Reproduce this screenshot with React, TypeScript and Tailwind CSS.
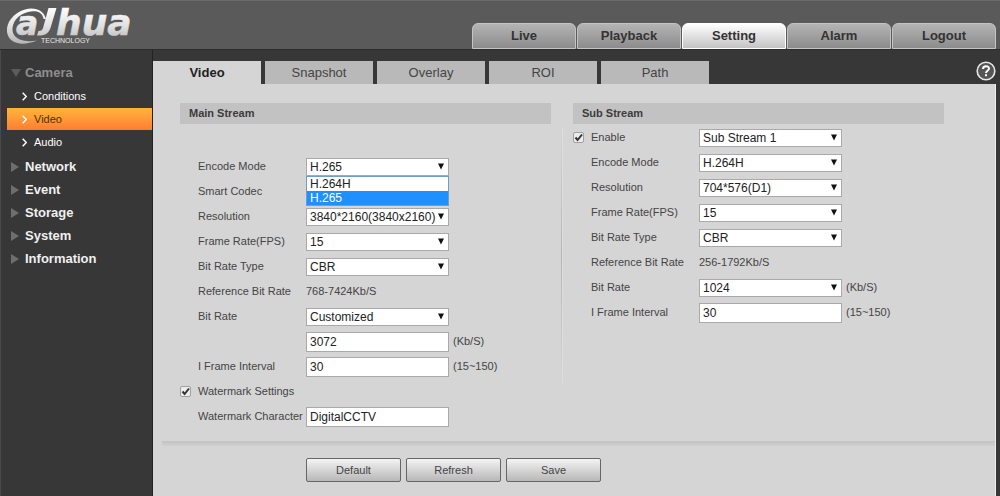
import { useId, useState } from 'react'
import type { ReactNode } from 'react'

const MAIN_TABS = ['Live', 'Playback', 'Setting', 'Alarm', 'Logout']
const SUB_TABS = ['Video', 'Snapshot', 'Overlay', 'ROI', 'Path']
const CAMERA_ITEMS = ['Conditions', 'Video', 'Audio']
const GROUPS = ['Network', 'Event', 'Storage', 'System', 'Information']
const CODECS = ['H.264H', 'H.265']

function Logo() {
  return (
    <svg width="134" height="48" viewBox="4 1 134 48" role="img" aria-label="Dahua Technology">
      <defs>
        <linearGradient id="metal" gradientUnits="userSpaceOnUse" x1="0" y1="7" x2="0" y2="44">
          <stop offset="0" stopColor="#ffffff" />
          <stop offset="0.5" stopColor="#e2e2e2" />
          <stop offset="1" stopColor="#b4b4b4" />
        </linearGradient>
      </defs>
      <g fill="url(#metal)">
        {/* swirl around the first letter */}
        <path d="M46 19 C44 10.500 35 6.500 25 9.500 C13 13 6 23 7 32 C8.500 43 21 47 37 40.500 C25 43 13.500 39.500 12.500 30.500 C12 22 18 14.500 28 12 C37 10 42.500 12.500 43.500 19 Z" />
        {/* hooked stem */}
        <path d="M48.500 8 H56.500 L50.800 27 C49 33.500 45 36 37 35.500 L38.500 31 C41.500 31 42.500 30 43.200 27.500 Z" />
        <g
          fontFamily="'DejaVu Sans', sans-serif"
          fontWeight="bold"
          fontStyle="italic"
          stroke="url(#metal)"
          strokeWidth="0.600"
        >
          <text x="16" y="35" fontSize="33">a</text>
          <text x="56" y="35" fontSize="36">hua</text>
        </g>
      </g>
      <text x="41" y="43" fontSize="7" fill="#e8e8e8" fontFamily="'Liberation Sans', sans-serif">
        TECHNOLOGY
      </text>
    </svg>
  )
}

function HelpIcon() {
  return (
    <svg width="20" height="20" viewBox="0 0 20 20" aria-hidden>
      <circle cx="10" cy="10" r="8.800" fill="#555" stroke="#e8e8e8" strokeWidth="1.600" />
      <path
        d="M7 8 C7 4.300 13 4.300 13 7.600 C13 9.800 10 9.800 10 12"
        fill="none"
        stroke="#fff"
        strokeWidth="2"
      />
      <rect x="9" y="13.200" width="2" height="2" fill="#fff" />
    </svg>
  )
}

function Row({ label, check, children }: { label?: string; check?: boolean; children?: (id: string) => ReactNode }) {
  const id = useId()
  const checkId = useId()
  return (
    <div className="grid h-[25px] grid-cols-[18px_108px_1fr] items-center">
      <span className="relative h-[11px] w-[11px]">
        {check && (
          <>
            <input
              id={checkId}
              type="checkbox"
              defaultChecked
              className="peer block h-[11px] w-[11px] appearance-none rounded-xs border border-[#a0a0a0] bg-[#ececec]"
            />
            <svg
              viewBox="0 0 11 11"
              className="pointer-events-none absolute inset-0 hidden h-[11px] w-[11px] peer-checked:block"
            >
              <path d="M2.500 5.500 L4.600 8 L9 2.500" fill="none" stroke="#333" strokeWidth="2" />
            </svg>
          </>
        )}
      </span>
      {label ? (
        <label htmlFor={check ? checkId : id} className="whitespace-nowrap">
          {label}
        </label>
      ) : (
        <span />
      )}
      <div className="flex items-center gap-1">{children?.(id)}</div>
    </div>
  )
}

function Select({ id, value, label, children }: { id?: string; value: string; label?: string; children?: ReactNode }) {
  return (
    <div className="relative w-[143px]">
      <select
        id={id}
        aria-label={label}
        defaultValue={value}
        className="block h-[18px] w-full appearance-none border border-[#a9a9a9] bg-white pl-[3px] text-[12px] leading-4 text-[#222]"
      >
        <option>{value}</option>
      </select>
      <svg
        viewBox="0 0 8 7"
        className="pointer-events-none absolute top-[5px] right-1 h-[7px] w-2"
      >
        <path d="M1 0.500 H7 L4 6.500 Z" fill="#111" />
      </svg>
      {children}
    </div>
  )
}

function TextBox({ id, value, label }: { id?: string; value: string; label?: string }) {
  return (
    <input
      id={id}
      type="text"
      aria-label={label}
      defaultValue={value}
      className="h-5 w-[143px] border border-[#a9a9a9] bg-white pl-[3px] text-[12px] text-[#222]"
    />
  )
}

function SectionTitle({ children }: { children: ReactNode }) {
  return (
    <h2 className="h-[21px] bg-[#c2c2c2] pl-[9px] text-[11px] leading-[21px] font-bold text-[#3c3c3c]">
      {children}
    </h2>
  )
}

function Sidebar() {
  return (
    <nav className="w-[153px] shrink-0 border-r border-l border-r-[#222] border-l-[#4a4a4a] pt-[11px] pl-[6px] text-white">
      <button type="button" className="flex h-6 items-center gap-1 pl-1 text-[13px] font-bold text-[#8e8e8e]">
        <svg width="10" height="8" viewBox="0 0 10 8" aria-hidden>
          <path d="M0 0 H10 L5 8 Z" fill="#5c5c5c" />
        </svg>
        Camera
      </button>
      <ul className="pb-px text-[11px]">
        {CAMERA_ITEMS.map((item) => (
          <li key={item} className="h-[23px]">
            <a
              href="#"
              className={`flex h-[22px] items-center gap-[7px] pl-[15px] ${
                item === 'Video' ? 'bg-linear-to-b from-[#ffb43c] to-[#ff7d32] text-[#4d3010]' : ''
              }`}
            >
              <svg width="5" height="9" viewBox="0 0 5 9" aria-hidden>
                <path d="M0.700 0.700 L4.300 4.500 L0.700 8.300" fill="none" stroke="#fff" strokeWidth="1.500" />
              </svg>
              {item}
            </a>
          </li>
        ))}
      </ul>
      {GROUPS.map((group) => (
        <button
          key={group}
          type="button"
          className="flex h-[23px] w-full items-center gap-[6px] pl-1 text-[13px] font-bold text-[#f0f0f0]"
        >
          <svg width="8" height="10" viewBox="0 0 8 10" aria-hidden>
            <path d="M0 0 L8 5 L0 10 Z" fill="#6e6e6e" />
          </svg>
          {group}
        </button>
      ))}
    </nav>
  )
}

function MainStream() {
  const [codec, setCodec] = useState('H.265')
  return (
    <section>
      <SectionTitle>Main Stream</SectionTitle>
      <div className="pt-[30px]">
        <Row label="Encode Mode">
          {(id) => (
            <Select id={id} value="H.265">
              <ul
                role="listbox"
                aria-label="Encode Mode"
                className="absolute inset-x-0 top-full z-10 border border-[#6f9fc8] bg-white text-[12px] leading-[14px] text-[#222]"
              >
                {CODECS.map((name) => (
                  <li
                    key={name}
                    role="option"
                    aria-selected={name === codec}
                    onClick={() => setCodec(name)}
                    className="pl-[3px] aria-selected:bg-[#1e90ff] aria-selected:text-white"
                  >
                    {name}
                  </li>
                ))}
              </ul>
            </Select>
          )}
        </Row>
        <Row label="Smart Codec" />
        <Row label="Resolution">{(id) => <Select id={id} value="3840*2160(3840x2160)" />}</Row>
        <Row label="Frame Rate(FPS)">{(id) => <Select id={id} value="15" />}</Row>
        <Row label="Bit Rate Type">{(id) => <Select id={id} value="CBR" />}</Row>
        <Row label="Reference Bit Rate">{(id) => <output id={id}>768-7424Kb/S</output>}</Row>
        <Row label="Bit Rate">{(id) => <Select id={id} value="Customized" />}</Row>
        <Row>
          {(id) => (
            <>
              <TextBox id={id} label="Custom bit rate" value="3072" />
              <span>(Kb/S)</span>
            </>
          )}
        </Row>
        <Row label="I Frame Interval">
          {(id) => (
            <>
              <TextBox id={id} value="30" />
              <span>(15~150)</span>
            </>
          )}
        </Row>
        <Row label="Watermark Settings" check />
        <Row label="Watermark Character">{(id) => <TextBox id={id} value="DigitalCCTV" />}</Row>
      </div>
    </section>
  )
}

function SubStream() {
  return (
    <section>
      <SectionTitle>Sub Stream</SectionTitle>
      <div className="pt-px">
        <Row label="Enable" check>
          {(id) => <Select id={id} label="Sub stream" value="Sub Stream 1" />}
        </Row>
        <Row label="Encode Mode">{(id) => <Select id={id} value="H.264H" />}</Row>
        <Row label="Resolution">{(id) => <Select id={id} value="704*576(D1)" />}</Row>
        <Row label="Frame Rate(FPS)">{(id) => <Select id={id} value="15" />}</Row>
        <Row label="Bit Rate Type">{(id) => <Select id={id} value="CBR" />}</Row>
        <Row label="Reference Bit Rate">{(id) => <output id={id}>256-1792Kb/S</output>}</Row>
        <Row label="Bit Rate">
          {(id) => (
            <>
              <Select id={id} value="1024" />
              <span>(Kb/S)</span>
            </>
          )}
        </Row>
        <Row label="I Frame Interval">
          {(id) => (
            <>
              <TextBox id={id} value="30" />
              <span>(15~150)</span>
            </>
          )}
        </Row>
      </div>
    </section>
  )
}

export default function App() {
  return (
    <div className="flex min-h-screen flex-col bg-[#373737] font-['Liberation_Sans',Arial,sans-serif]">
      <header className="flex h-[50px] items-end justify-between border-t border-b border-t-[#6a6a6a] border-b-[#2c2c2c] bg-[#5a5a5a] pr-1 pl-1">
        <Logo />
        <nav className="flex gap-px">
          {MAIN_TABS.map((tab) => (
            <button
              key={tab}
              type="button"
              className={`h-[26px] w-[104px] rounded-t-md border text-[13px] font-bold text-[#333] ${
                tab === 'Setting'
                  ? 'border-white bg-linear-to-b from-white to-[#c4c4c4]'
                  : 'border-[#c4c4c4] bg-linear-to-b from-[#b4b4b4] to-[#8c8c8c]'
              }`}
            >
              {tab}
            </button>
          ))}
        </nav>
      </header>

      <div className="flex flex-1">
        <Sidebar />
        <div className="flex min-w-0 flex-1 flex-col pt-[11px] pr-1">
          <div className="flex items-start justify-between">
            <div role="tablist" className="flex gap-1">
              {SUB_TABS.map((tab) => (
                <button
                  key={tab}
                  type="button"
                  role="tab"
                  aria-selected={tab === 'Video'}
                  className="h-[23px] w-[108px] bg-[#b9b9b9] text-[13px] text-[#444] aria-selected:bg-[#d5d5d5] aria-selected:font-bold aria-selected:text-[#222]"
                >
                  {tab}
                </button>
              ))}
            </div>
            <button type="button" aria-label="Help">
              <HelpIcon />
            </button>
          </div>

          <main className="flex-1 border-r border-[#eee] bg-[#d5d5d5] text-[11px] text-[#444]">
            <div className="grid grid-cols-[1fr_2px_1fr] gap-x-[10px] pt-[19px] pr-[51px] pl-[27px]">
              <MainStream />
              <div className="my-6 h-[256px] border-r border-r-[#dedede] bg-linear-to-b from-[#d5d5d5] via-[#b4b4b4] to-[#d5d5d5]" />
              <SubStream />
            </div>
            <div className="mt-3 ml-[9px] h-[5px] bg-linear-to-b from-[#c2c2c2] to-[#d1d1d1]" />
            <div className="flex gap-[5px] pt-3 pb-3 pl-[153px]">
              {['Default', 'Refresh', 'Save'].map((action) => (
                <button
                  key={action}
                  type="button"
                  className="h-6 w-[95px] rounded-xs border border-[#666] bg-linear-to-b from-[#f4f4f4] to-[#b8b8b8] text-[#444]"
                >
                  {action}
                </button>
              ))}
            </div>
          </main>
        </div>
      </div>
    </div>
  )
}
